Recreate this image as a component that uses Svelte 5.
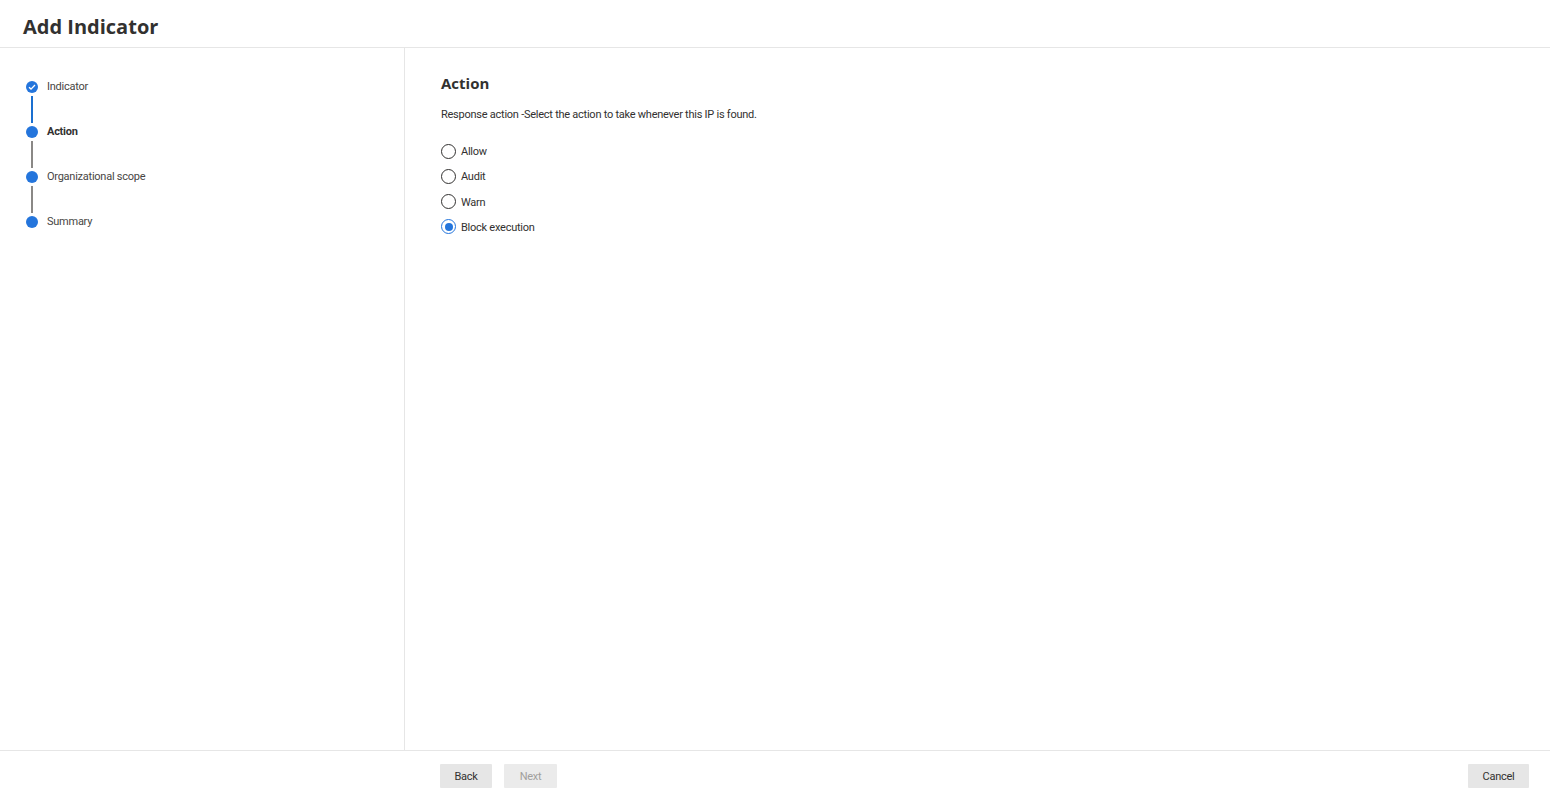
<script lang="ts">
	const steps = [
		{ label: "Indicator", done: true, current: false },
		{ label: "Action", done: false, current: true },
		{ label: "Organizational scope", done: false, current: false },
		{ label: "Summary", done: false, current: false },
	];

	const actions = ["Allow", "Audit", "Warn", "Block execution"];

	let selected = $state("Block execution");
</script>

<div class="page">
	<header>
		<h1>Add Indicator</h1>
	</header>

	<div class="body">
		<nav>
			{#each steps as step, i}
				<div class="step">
					<div class="marker">
						<span class="dot">
							{#if step.done}
								<svg width="8" height="8" viewBox="0 0 8 8">
									<path d="M1 4.3 L3 6.1 L7 2" fill="none" stroke="#fff" stroke-width="1.3" />
								</svg>
							{/if}
						</span>
						{#if i < steps.length - 1}
							<span class="line" class:active={step.done}></span>
						{/if}
					</div>
					<span class="label" class:current={step.current}>{step.label}</span>
				</div>
			{/each}
		</nav>

		<main>
			<h2>Action</h2>
			<p>Response action -Select the action to take whenever this IP is found.</p>
			<div class="options">
				{#each actions as action}
					<label class="option">
						<input type="radio" name="action" value={action} bind:group={selected} />
						<span class="circle"></span>
						<span class="text">{action}</span>
					</label>
				{/each}
			</div>
		</main>
	</div>

	<footer>
		<div class="nav-buttons">
			<button>Back</button>
			<button disabled>Next</button>
		</div>
		<button class="cancel">Cancel</button>
	</footer>
</div>

<style>
	:global(body) {
		margin: 0;
		background: #fff;
		overflow: hidden;
	}
	.page {
		display: flex;
		flex-direction: column;
		height: 788px;
		font-family: Roboto, "Liberation Sans", sans-serif;
		font-size: 11px;
		letter-spacing: -0.25px;
		color: #323130;
	}
	header {
		height: 47px;
		border-bottom: 1px solid #e6e6e6;
		padding-left: 23px;
		display: flex;
		align-items: center;
	}
	h1 {
		margin: 6px 0 0;
		font-family: "Open Sans", sans-serif;
		font-size: 20px;
		font-weight: 700;
		letter-spacing: 0;
	}
	.body {
		flex: 1;
		display: flex;
		min-height: 0;
	}
	nav {
		width: 378px;
		flex-shrink: 0;
		border-right: 1px solid #e6e6e6;
		padding: 33px 0 0 26px;
	}
	.step {
		display: flex;
		gap: 9px;
		height: 45px;
	}
	.marker {
		width: 12px;
		display: flex;
		flex-direction: column;
		align-items: center;
	}
	.dot {
		width: 12px;
		height: 12px;
		border-radius: 50%;
		background: #2475dc;
		display: flex;
		align-items: center;
		justify-content: center;
		flex-shrink: 0;
	}
	.line {
		width: 2px;
		height: 27px;
		margin-top: 3px;
		background: #8a8886;
	}
	.line.active {
		background: #1a6fd0;
	}
	.label {
		line-height: 12px;
		color: #484644;
	}
	.label.current {
		font-weight: 700;
		color: #323130;
	}
	main {
		flex: 1;
		padding: 26px 0 0 36px;
	}
	h2 {
		margin: 0;
		font-family: "Open Sans", sans-serif;
		font-size: 15px;
		line-height: 18px;
		font-weight: 700;
		letter-spacing: 0;
	}
	p {
		margin: 15px 0 0;
		line-height: 16px;
	}
	.options {
		margin-top: 20px;
		display: flex;
		flex-direction: column;
		gap: 9.33px;
	}
	.option {
		display: flex;
		align-items: center;
		gap: 5px;
		height: 16px;
	}
	.option input {
		position: absolute;
		opacity: 0;
		width: 0;
		height: 0;
	}
	.text {
		margin-top: 1px;
	}
	.circle {
		width: 13px;
		height: 13px;
		border: 1px solid #323130;
		border-radius: 50%;
		display: flex;
		align-items: center;
		justify-content: center;
		flex-shrink: 0;
	}
	input:checked + .circle {
		border-color: #2475dc;
	}
	input:checked + .circle::after {
		content: "";
		width: 8px;
		height: 8px;
		border-radius: 50%;
		background: #2475dc;
	}
	footer {
		height: 37px;
		border-top: 1px solid #e6e6e6;
		display: flex;
		justify-content: space-between;
		align-items: flex-end;
		padding: 0 21px 0 440px;
	}
	.nav-buttons {
		display: flex;
		gap: 12px;
	}
	button {
		width: 52px;
		height: 24px;
		padding: 0;
		border: none;
		border-radius: 1px;
		background: #e6e6e6;
		color: #323130;
		font: inherit;
		letter-spacing: inherit;
		cursor: pointer;
	}
	button:disabled {
		width: 53px;
		background: #ebebeb;
		color: #a19f9d;
		cursor: default;
	}
	.cancel {
		width: 61px;
	}
</style>
